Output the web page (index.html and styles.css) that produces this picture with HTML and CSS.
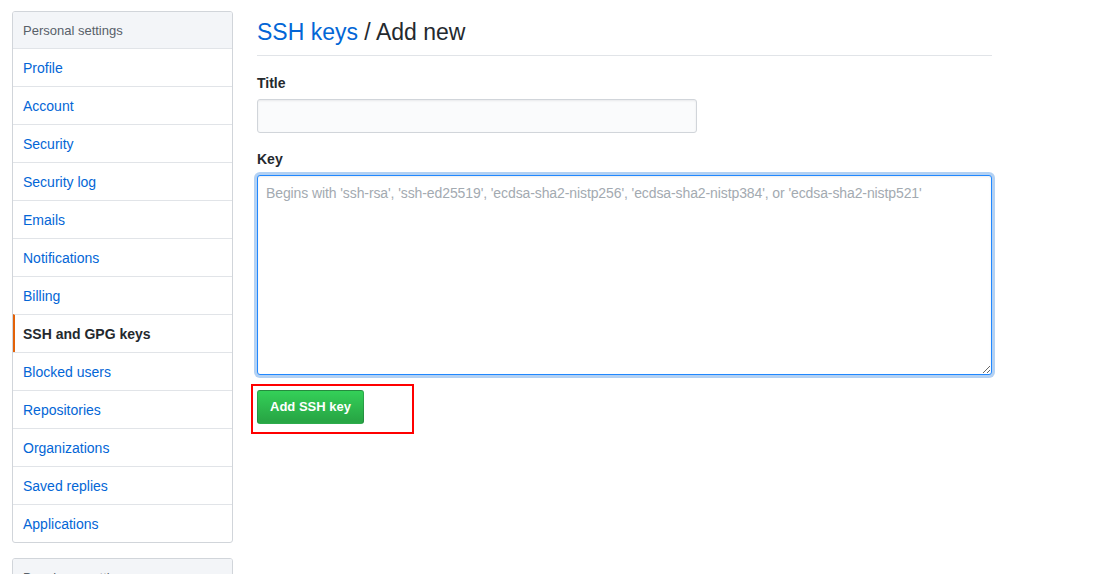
FILE: index.html
```html
<!DOCTYPE html>
<html>
<head>
    <title>Add new SSH key</title>
    <meta name="viewport" content="width=device-width, initial-scale=1">
    <link rel="stylesheet" href="styles.css">
</head>
<body>
<div class="page">
    <div class="sidebar">
        <nav class="menu">
            <div class="menu-heading">Personal settings</div>
            <a class="menu-item" href="#">Profile</a>
            <a class="menu-item" href="#">Account</a>
            <a class="menu-item" href="#">Security</a>
            <a class="menu-item" href="#">Security log</a>
            <a class="menu-item" href="#">Emails</a>
            <a class="menu-item" href="#">Notifications</a>
            <a class="menu-item" href="#">Billing</a>
            <a class="menu-item selected" href="#">SSH and GPG keys</a>
            <a class="menu-item" href="#">Blocked users</a>
            <a class="menu-item" href="#">Repositories</a>
            <a class="menu-item" href="#">Organizations</a>
            <a class="menu-item" href="#">Saved replies</a>
            <a class="menu-item" href="#">Applications</a>
        </nav>
        <nav class="menu">
            <div class="menu-heading">Developer settings</div>
        </nav>
    </div>

    <div class="main">
        <div class="subhead">
            <h2 class="subhead-heading"><a href="#">SSH keys</a> / Add new</h2>
        </div>

        <form>
            <dl class="form-group">
                <dt><label for="title">Title</label></dt>
                <dd><input class="form-control title-input" type="text" id="title"></dd>
            </dl>
            <dl class="form-group">
                <dt><label for="key">Key</label></dt>
                <dd><textarea class="form-control key-input focused" id="key" placeholder="Begins with 'ssh-rsa', 'ssh-ed25519', 'ecdsa-sha2-nistp256', 'ecdsa-sha2-nistp384', or 'ecdsa-sha2-nistp521'"></textarea></dd>
            </dl>
            <div class="highlight-box">
                <button type="submit" class="btn-primary">Add SSH key</button>
            </div>
        </form>
    </div>
</div>
</body>
</html>
```

FILE: styles.css
```css
body {
    margin: 0;
    color: #24292e;
    background-color: #ffffff;
    font-family: "Liberation Sans", Arial, sans-serif;
    font-size: 14px;
    line-height: 1.5;
    overflow: hidden;
}

a {
    color: #0366d6;
    text-decoration: none;
}

.page {
    display: flex;
    gap: 24px;
    padding: 11px 12px 0;
}

.sidebar {
    width: 221px;
    flex-shrink: 0;
}

.menu {
    display: flex;
    flex-direction: column;
    border: 1px solid #d1d5da;
    border-radius: 3px;
    margin-bottom: 15px;
    overflow: hidden;
}

.menu-heading {
    padding: 8px 10px 7px;
    line-height: 21px;
    font-size: 13px;
    color: #586069;
    background-color: #f3f5f8;
    border-bottom: 1px solid #e1e4e8;
}

.menu-item {
    padding: 9px 10px 7px;
    line-height: 21px;
    border-top: 1px solid #e1e4e8;
}

.menu-heading + .menu-item {
    border-top: 0;
}

.menu-item.selected {
    color: #24292e;
    font-weight: 600;
    border-left: 2px solid #e36209;
    padding-left: 8px;
}

.main {
    width: 735px;
}

.subhead {
    margin-bottom: 16px;
    padding: 3px 0 5px;
    border-bottom: 1px solid #e1e4e8;
}

.subhead-heading {
    margin: 0;
    font-size: 23px;
    font-weight: normal;
    line-height: 36px;
}

.form-group {
    margin: 15px 0;
}

.form-group dt {
    margin: 0 0 5px;
    padding-top: 1px;
    font-weight: 600;
    line-height: 21px;
}

.form-group dd {
    margin: 0;
}

.form-control {
    box-sizing: border-box;
    display: block;
    padding: 6px 8px;
    font-family: inherit;
    font-size: 14px;
    line-height: 20px;
    color: #24292e;
    background-color: #fafbfc;
    border: 1px solid #d1d5da;
    border-radius: 3px;
    box-shadow: inset 0 1px 2px rgba(27, 31, 35, 0.075);
    outline: none;
}

.title-input {
    width: 440px;
    height: 34px;
}

.key-input {
    width: 735px;
    height: 200px;
    padding: 7px 8px;
    resize: vertical;
}

.key-input::placeholder {
    color: #a3aab1;
    letter-spacing: -0.1px;
}

.focused {
    background-color: #ffffff;
    border-color: #2188ff;
    box-shadow: inset 0 1px 2px rgba(27, 31, 35, 0.075), 0 0 0 3px rgba(3, 102, 214, 0.3);
}

.highlight-box {
    display: inline-block;
    margin: -6px 0 0 -6px;
    padding: 4px 48px 8px 4px;
    border: 2px solid #ff0000;
}

.btn-primary {
    display: block;
    padding: 6px 12px;
    font-family: inherit;
    font-size: 13px;
    font-weight: 600;
    line-height: 20px;
    color: #ffffff;
    background-color: #28a745;
    background-image: linear-gradient(-180deg, #34d058 0%, #28a745 90%);
    border: 1px solid rgba(27, 31, 35, 0.2);
    border-radius: 3px;
    cursor: pointer;
}
```
